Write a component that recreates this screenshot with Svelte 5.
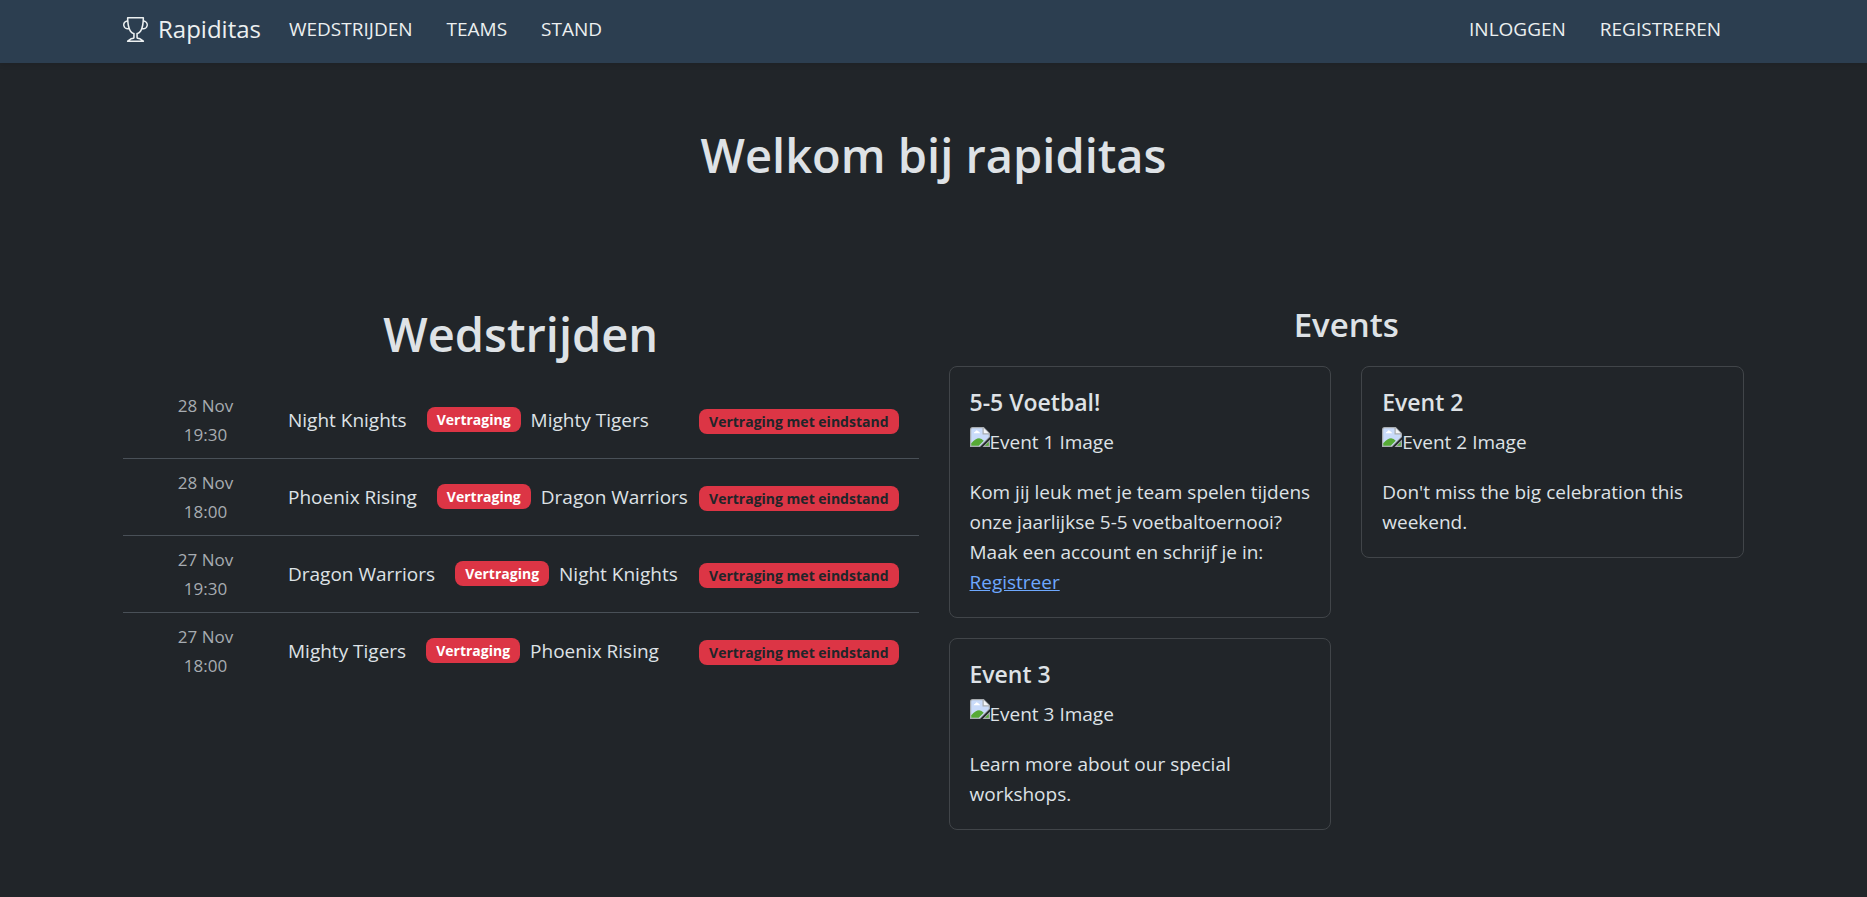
<script lang="ts">
  interface Match {
    date: string;
    time: string;
    home: string;
    away: string;
  }

  interface EventItem {
    title: string;
    imageAlt: string;
    text: string;
    link?: string;
  }

  const mainLinks = ['Wedstrijden', 'Teams', 'Stand'];
  const accountLinks = ['Inloggen', 'Registreren'];

  const matches: Match[] = [
    { date: '28 Nov', time: '19:30', home: 'Night Knights', away: 'Mighty Tigers' },
    { date: '28 Nov', time: '18:00', home: 'Phoenix Rising', away: 'Dragon Warriors' },
    { date: '27 Nov', time: '19:30', home: 'Dragon Warriors', away: 'Night Knights' },
    { date: '27 Nov', time: '18:00', home: 'Mighty Tigers', away: 'Phoenix Rising' }
  ];

  const events: EventItem[] = [
    {
      title: '5-5 Voetbal!',
      imageAlt: 'Event 1 Image',
      text: 'Kom jij leuk met je team spelen tijdens onze jaarlijkse 5-5 voetbaltoernooi? Maak een account en schrijf je in:',
      link: 'Registreer'
    },
    { title: 'Event 2', imageAlt: 'Event 2 Image', text: "Don't miss the big celebration this weekend." },
    { title: 'Event 3', imageAlt: 'Event 3 Image', text: 'Learn more about our special workshops.' }
  ];
</script>

<header class="navbar">
  <nav class="container nav-inner">
    <a class="brand" href="#home">
      <svg class="trophy" viewBox="0 0 16 16" fill="currentColor" aria-hidden="true">
        <path d="M2.5.5A.5.5 0 0 1 3 0h10a.5.5 0 0 1 .5.5q0 .807-.034 1.536a3 3 0 1 1-1.133 5.89c-.79 1.865-1.878 2.777-2.833 3.011v2.173l1.425.356c.194.048.377.135.537.255L13.3 15.1a.5.5 0 0 1-.3.9H3a.5.5 0 0 1-.3-.9l1.838-1.379c.16-.12.343-.207.537-.255L6.5 13.11v-2.173c-.955-.234-2.043-1.146-2.833-3.012a3 3 0 1 1-1.132-5.89A33 33 0 0 1 2.5.5m.099 2.54a2 2 0 0 0 .72 3.935c-.333-1.05-.588-2.346-.72-3.935m10.083 3.935a2 2 0 0 0 .72-3.935c-.133 1.59-.388 2.885-.72 3.935M3.504 1q.01.775.056 1.469c.13 2.028.457 3.546.87 4.667C5.294 9.48 6.484 10 7 10a.5.5 0 0 1 .5.5v2.61a1 1 0 0 1-.757.97l-1.426.356a.5.5 0 0 0-.179.085L4.5 15h7l-.638-.479a.5.5 0 0 0-.18-.085l-1.425-.356a1 1 0 0 1-.757-.97V10.5A.5.5 0 0 1 9 10c.516 0 1.706-.52 2.57-2.864.413-1.12.74-2.64.87-4.667q.045-.694.056-1.469z" />
      </svg>
      Rapiditas
    </a>
    <div class="links">
      {#each mainLinks as label}
        <a href="#{label.toLowerCase()}">{label}</a>
      {/each}
    </div>
    <div class="links account">
      {#each accountLinks as label}
        <a href="#{label.toLowerCase()}">{label}</a>
      {/each}
    </div>
  </nav>
</header>

<main class="container">
  <h1 class="welcome">Welkom bij rapiditas</h1>

  <div class="columns">
    <section>
      <h1>Wedstrijden</h1>
      <ul class="matches">
        {#each matches as match}
          <li class="match">
            <div class="when">
              <span>{match.date}</span>
              <span>{match.time}</span>
            </div>
            <div class="teams">
              <span class="home">{match.home}</span>
              <span class="badge">Vertraging</span>
              <span>{match.away}</span>
            </div>
            <span class="badge status">Vertraging met eindstand</span>
          </li>
        {/each}
      </ul>
    </section>

    <section>
      <h2>Events</h2>
      <div class="cards">
        {#each events as event}
          <article class="card">
            <h5>{event.title}</h5>
            <div class="image">
              <!-- placeholder for a missing picture -->
              <svg class="broken" viewBox="0 0 16 16" aria-hidden="true">
                <path d="M0 16V2Q0 0 2 0H11L16 5V8L8 16Z" fill="#a9adb1" />
                <path d="M1 15V2Q1 1 2 1H10V6H15V8L8 15Z" fill="#c9dbfa" />
                <path d="M11 1V5H15Z" fill="#f4f6f8" />
                <path d="M3 5Q3 4 4 4Q5 2 6 3Q7 3 7 4Q8 4 8 5Z" fill="#fff" />
                <path d="M1 15V13Q7 6 11 11L7 15Z" fill="#57aa36" />
                <path d="M16 10V16H10Z" fill="#a9adb1" />
                <path d="M15 12V15H12Z" fill="#57aa36" />
              </svg>
              <span>{event.imageAlt}</span>
            </div>
            <p>
              {event.text}
              {#if event.link}
                <a href="#registreren">{event.link}</a>
              {/if}
            </p>
          </article>
        {/each}
      </div>
    </section>
  </div>
</main>

<style>
  :global(body) {
    margin: 0;
    background: #212529;
    color: #dee2e6;
    font-family: "Segoe UI", "Open Sans", "Noto Sans", sans-serif;
    font-size: 19px;
    line-height: 30px;
  }

  .container {
    box-sizing: border-box;
    width: 100%;
    max-width: 1651px;
    margin: 0 auto;
    padding: 0 15px;
  }

  .navbar {
    background: #2c3e50;
    box-shadow: 0 2px 5px rgba(0, 0, 0, 0.1);
  }

  .nav-inner {
    display: flex;
    align-items: center;
    padding-top: 10px;
    padding-bottom: 15px;
  }

  .brand,
  .links a {
    color: #ecf0f1;
    text-decoration: none;
  }

  .brand {
    display: flex;
    align-items: center;
    gap: 10px;
    margin-right: 28px;
    font-size: 24px;
    line-height: 38px;
  }

  .trophy {
    width: 25px;
    height: 25px;
  }

  .links {
    display: flex;
    gap: 34px;
    text-transform: uppercase;
  }

  .account {
    margin-left: auto;
    padding-right: 23px;
  }

  h1,
  h2,
  h5 {
    margin: 0;
    font-weight: 600;
  }

  h1 {
    margin-bottom: 18px;
    font-size: 47px;
    line-height: 60px;
    text-align: center;
  }

  h2 {
    margin-bottom: 20px;
    font-size: 33px;
    line-height: 42px;
    text-align: center;
  }

  h5 {
    margin-bottom: 10px;
    font-size: 23px;
    line-height: 30px;
  }

  .welcome {
    margin: 0;
    padding: 62px 0 119px;
  }

  .columns {
    display: grid;
    grid-template-columns: 1fr 1fr;
    gap: 30px;
    align-items: start;
  }

  .matches {
    margin: 0;
    padding: 0;
    list-style: none;
  }

  .match {
    display: grid;
    grid-template-columns: 165px 1fr auto;
    align-items: center;
    padding: 9px 20px 9px 0;
    border-bottom: 1px solid #495057;
  }

  .match:last-child {
    border-bottom: 0;
  }

  .when {
    display: flex;
    flex-direction: column;
    align-items: center;
    color: #a7acb1;
    font-size: 17px;
    line-height: 29px;
  }

  .teams {
    display: flex;
    align-items: center;
    gap: 10px;
    white-space: nowrap;
  }

  .home {
    margin-right: 10px;
  }

  .badge {
    margin-bottom: 2px;
    padding: 0 10px;
    border-radius: 8px;
    background: #dc3545;
    color: #fff;
    font-size: 14px;
    font-weight: 700;
    line-height: 25px;
    white-space: nowrap;
  }

  .status {
    margin: 3px 0 0;
    color: #212529;
  }

  .cards {
    display: grid;
    grid-template-columns: 1fr 1fr;
    align-items: start;
    gap: 20px 30px;
  }

  .card {
    padding: 20px;
    border: 1px solid #414549;
    border-radius: 8px;
  }

  .image {
    display: flex;
    align-items: flex-start;
    margin-bottom: 20px;
  }

  .broken {
    width: 20px;
    height: 20px;
  }

  .card p {
    margin: 0 -10px 0 0;
  }

  .card a {
    color: #6ea8fe;
  }

  @media (max-width: 1000px) {
    .columns {
      grid-template-columns: 1fr;
    }
  }
</style>
